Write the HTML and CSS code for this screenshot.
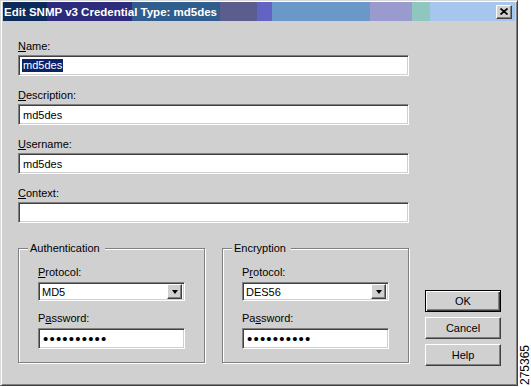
FILE: index.html
```html
<!DOCTYPE html>
<html lang="en">
<head>
    <meta charset="UTF-8">
    <title>Edit SNMP v3 Credential Type: md5des</title>
    <link rel="stylesheet" href="styles.css">
</head>
<body>
    <div class="dialog">
        <div class="titlebar">
            <span class="title">Edit SNMP v3 Credential Type: md5des</span>
            <span class="close-btn">
                <svg width="8" height="7" viewBox="0 0 8 7">
                    <path d="M0.5 0.5 L7.5 6.5 M7.5 0.5 L0.5 6.5" stroke="#000" stroke-width="1.7" fill="none"/>
                </svg>
            </span>
        </div>

        <div class="dialog-body">
            <div class="form">
                <div class="field">
                    <label class="lbl"><u>N</u>ame:</label>
                    <div class="textbox"><span class="selected">md5des</span></div>
                </div>
                <div class="field">
                    <label class="lbl"><u>D</u>escription:</label>
                    <div class="textbox">md5des</div>
                </div>
                <div class="field">
                    <label class="lbl"><u>U</u>sername:</label>
                    <div class="textbox">md5des</div>
                </div>
                <div class="field">
                    <label class="lbl"><u>C</u>ontext:</label>
                    <div class="textbox"></div>
                </div>

                <div class="groups">
                    <fieldset class="group">
                        <legend>Authentication</legend>
                        <div class="field">
                            <label class="lbl"><u>P</u>rotocol:</label>
                            <div class="combo">
                                <span class="combo-text">MD5</span>
                                <span class="combo-arrow"><i></i></span>
                            </div>
                        </div>
                        <div class="field">
                            <label class="lbl">P<u>a</u>ssword:</label>
                            <div class="textbox"><span class="dots">••••••••••</span></div>
                        </div>
                    </fieldset>
                    <fieldset class="group">
                        <legend>Encryption</legend>
                        <div class="field">
                            <label class="lbl">P<u>r</u>otocol:</label>
                            <div class="combo">
                                <span class="combo-text">DES56</span>
                                <span class="combo-arrow"><i></i></span>
                            </div>
                        </div>
                        <div class="field">
                            <label class="lbl">Pa<u>s</u>sword:</label>
                            <div class="textbox"><span class="dots">••••••••••</span></div>
                        </div>
                    </fieldset>
                </div>
            </div>

            <div class="buttons">
                <button class="btn default">OK</button>
                <button class="btn">Cancel</button>
                <button class="btn">Help</button>
            </div>
        </div>
    </div>

    <div class="figure-id">275365</div>
</body>
</html>
```

FILE: styles.css
```css
body {
    margin: 0;
    background: #fff;
    font-family: 'Liberation Sans', Arial, sans-serif;
    font-size: 11px;
    color: #000;
    display: flex;
    height: 387px;
}

.dialog {
    width: 518px;
    height: 386px;
    box-sizing: border-box;
    background: #d0d0d0;
    border: 1px solid;
    border-color: #d8d8d8 #404040 #404040 #d8d8d8;
    box-shadow: inset 1px 1px #fff, inset -1px -1px #808080;
    padding: 1px 2px 2px 2px;
    display: flex;
    flex-direction: column;
}

.titlebar {
    height: 19px;
    display: flex;
    align-items: center;
    justify-content: space-between;
    padding: 0 3px 0 1px;
    background: linear-gradient(90deg,
        #0b2b5b 0, #0b2b5b 44px,
        #2c2b7c 44px, #2c2b7c 129px,
        #2f5e8e 129px, #2f5e8e 217px,
        #5b5d8c 217px, #5b5d8c 254px,
        #6363c6 254px, #6363c6 269px,
        #6a98c8 269px, #6a98c8 367px,
        #9a9ace 367px, #9a9ace 409px,
        #8fc6be 409px, #8fc6be 427px,
        #a6c6ee 427px);
}

.title {
    color: #fff;
    font-weight: bold;
    font-size: 11.5px;
    white-space: nowrap;
}

.close-btn {
    width: 16px;
    height: 14px;
    box-sizing: border-box;
    background: #d0d0d0;
    border: 1px solid;
    border-color: #fff #404040 #404040 #fff;
    box-shadow: inset -1px -1px #808080;
    display: flex;
    align-items: center;
    justify-content: center;
}

.close-btn svg {
    display: block;
}

.dialog-body {
    flex: 1;
    display: flex;
    padding: 18px 14px 17px 15px;
    gap: 16px;
}

.form {
    width: 391px;
}

.lbl {
    display: block;
    line-height: 14px;
    margin-bottom: 2px;
}

.field + .field {
    margin-top: 12px;
}

.textbox {
    height: 21px;
    box-sizing: border-box;
    background: #fff;
    border: 1px solid;
    border-color: #808080 #fff #fff #808080;
    box-shadow: inset 1px 1px #404040, inset -1px -1px #d0d0d0;
    padding: 0 4px;
    display: flex;
    align-items: center;
    white-space: nowrap;
}

.selected {
    background: #0a246a;
    color: #fff;
    line-height: 13px;
    padding: 0 1px;
    margin-left: -1px;
}

.dots {
    font-size: 15px;
    letter-spacing: 1.2px;
    line-height: 15px;
}

.groups {
    display: flex;
    gap: 17px;
    margin-top: 18px;
}

.group {
    flex: 1;
    min-width: 0;
    margin: 0;
    padding: 10px 19px 13px 19px;
    border: 1px solid #808080;
    box-shadow: inset 1px 1px #fff, 1px 1px #fff;
}

.group legend {
    margin-left: -10px;
    padding: 0 5px 0 2px;
    line-height: 14px;
    background: #d0d0d0;
}

.group .lbl {
    margin-bottom: 3px;
}

.group .field + .field {
    margin-top: 10px;
}

.combo {
    height: 19px;
    box-sizing: border-box;
    background: #fff;
    border: 1px solid;
    border-color: #808080 #fff #fff #808080;
    box-shadow: inset 1px 1px #404040, inset -1px -1px #d0d0d0;
    padding: 2px 2px 2px 3px;
    display: flex;
    align-items: center;
    justify-content: space-between;
}

.combo-arrow {
    width: 15px;
    height: 15px;
    box-sizing: border-box;
    background: #d0d0d0;
    border: 1px solid;
    border-color: #fff #404040 #404040 #fff;
    box-shadow: inset -1px -1px #808080;
    display: flex;
    align-items: center;
    justify-content: center;
}

.combo-arrow i {
    width: 0;
    height: 0;
    border-left: 3.5px solid transparent;
    border-right: 3.5px solid transparent;
    border-top: 4px solid #000;
}

.buttons {
    align-self: flex-end;
    display: flex;
    flex-direction: column;
    gap: 5px;
}

.btn {
    width: 76px;
    height: 22px;
    box-sizing: border-box;
    font-family: inherit;
    font-size: 11px;
    color: #000;
    background: #d0d0d0;
    border: 1px solid;
    border-color: #fff #404040 #404040 #fff;
    box-shadow: inset -1px -1px #808080;
    padding: 0;
}

.btn.default {
    border: 1px solid #000;
    box-shadow: inset 1px 1px #fff, inset -1px -1px #404040, inset -2px -2px #808080;
}

.figure-id {
    align-self: flex-end;
    writing-mode: vertical-rl;
    transform: rotate(180deg);
    font-size: 12px;
    line-height: 12px;
    margin: 0 0 2px 1px;
}
```
